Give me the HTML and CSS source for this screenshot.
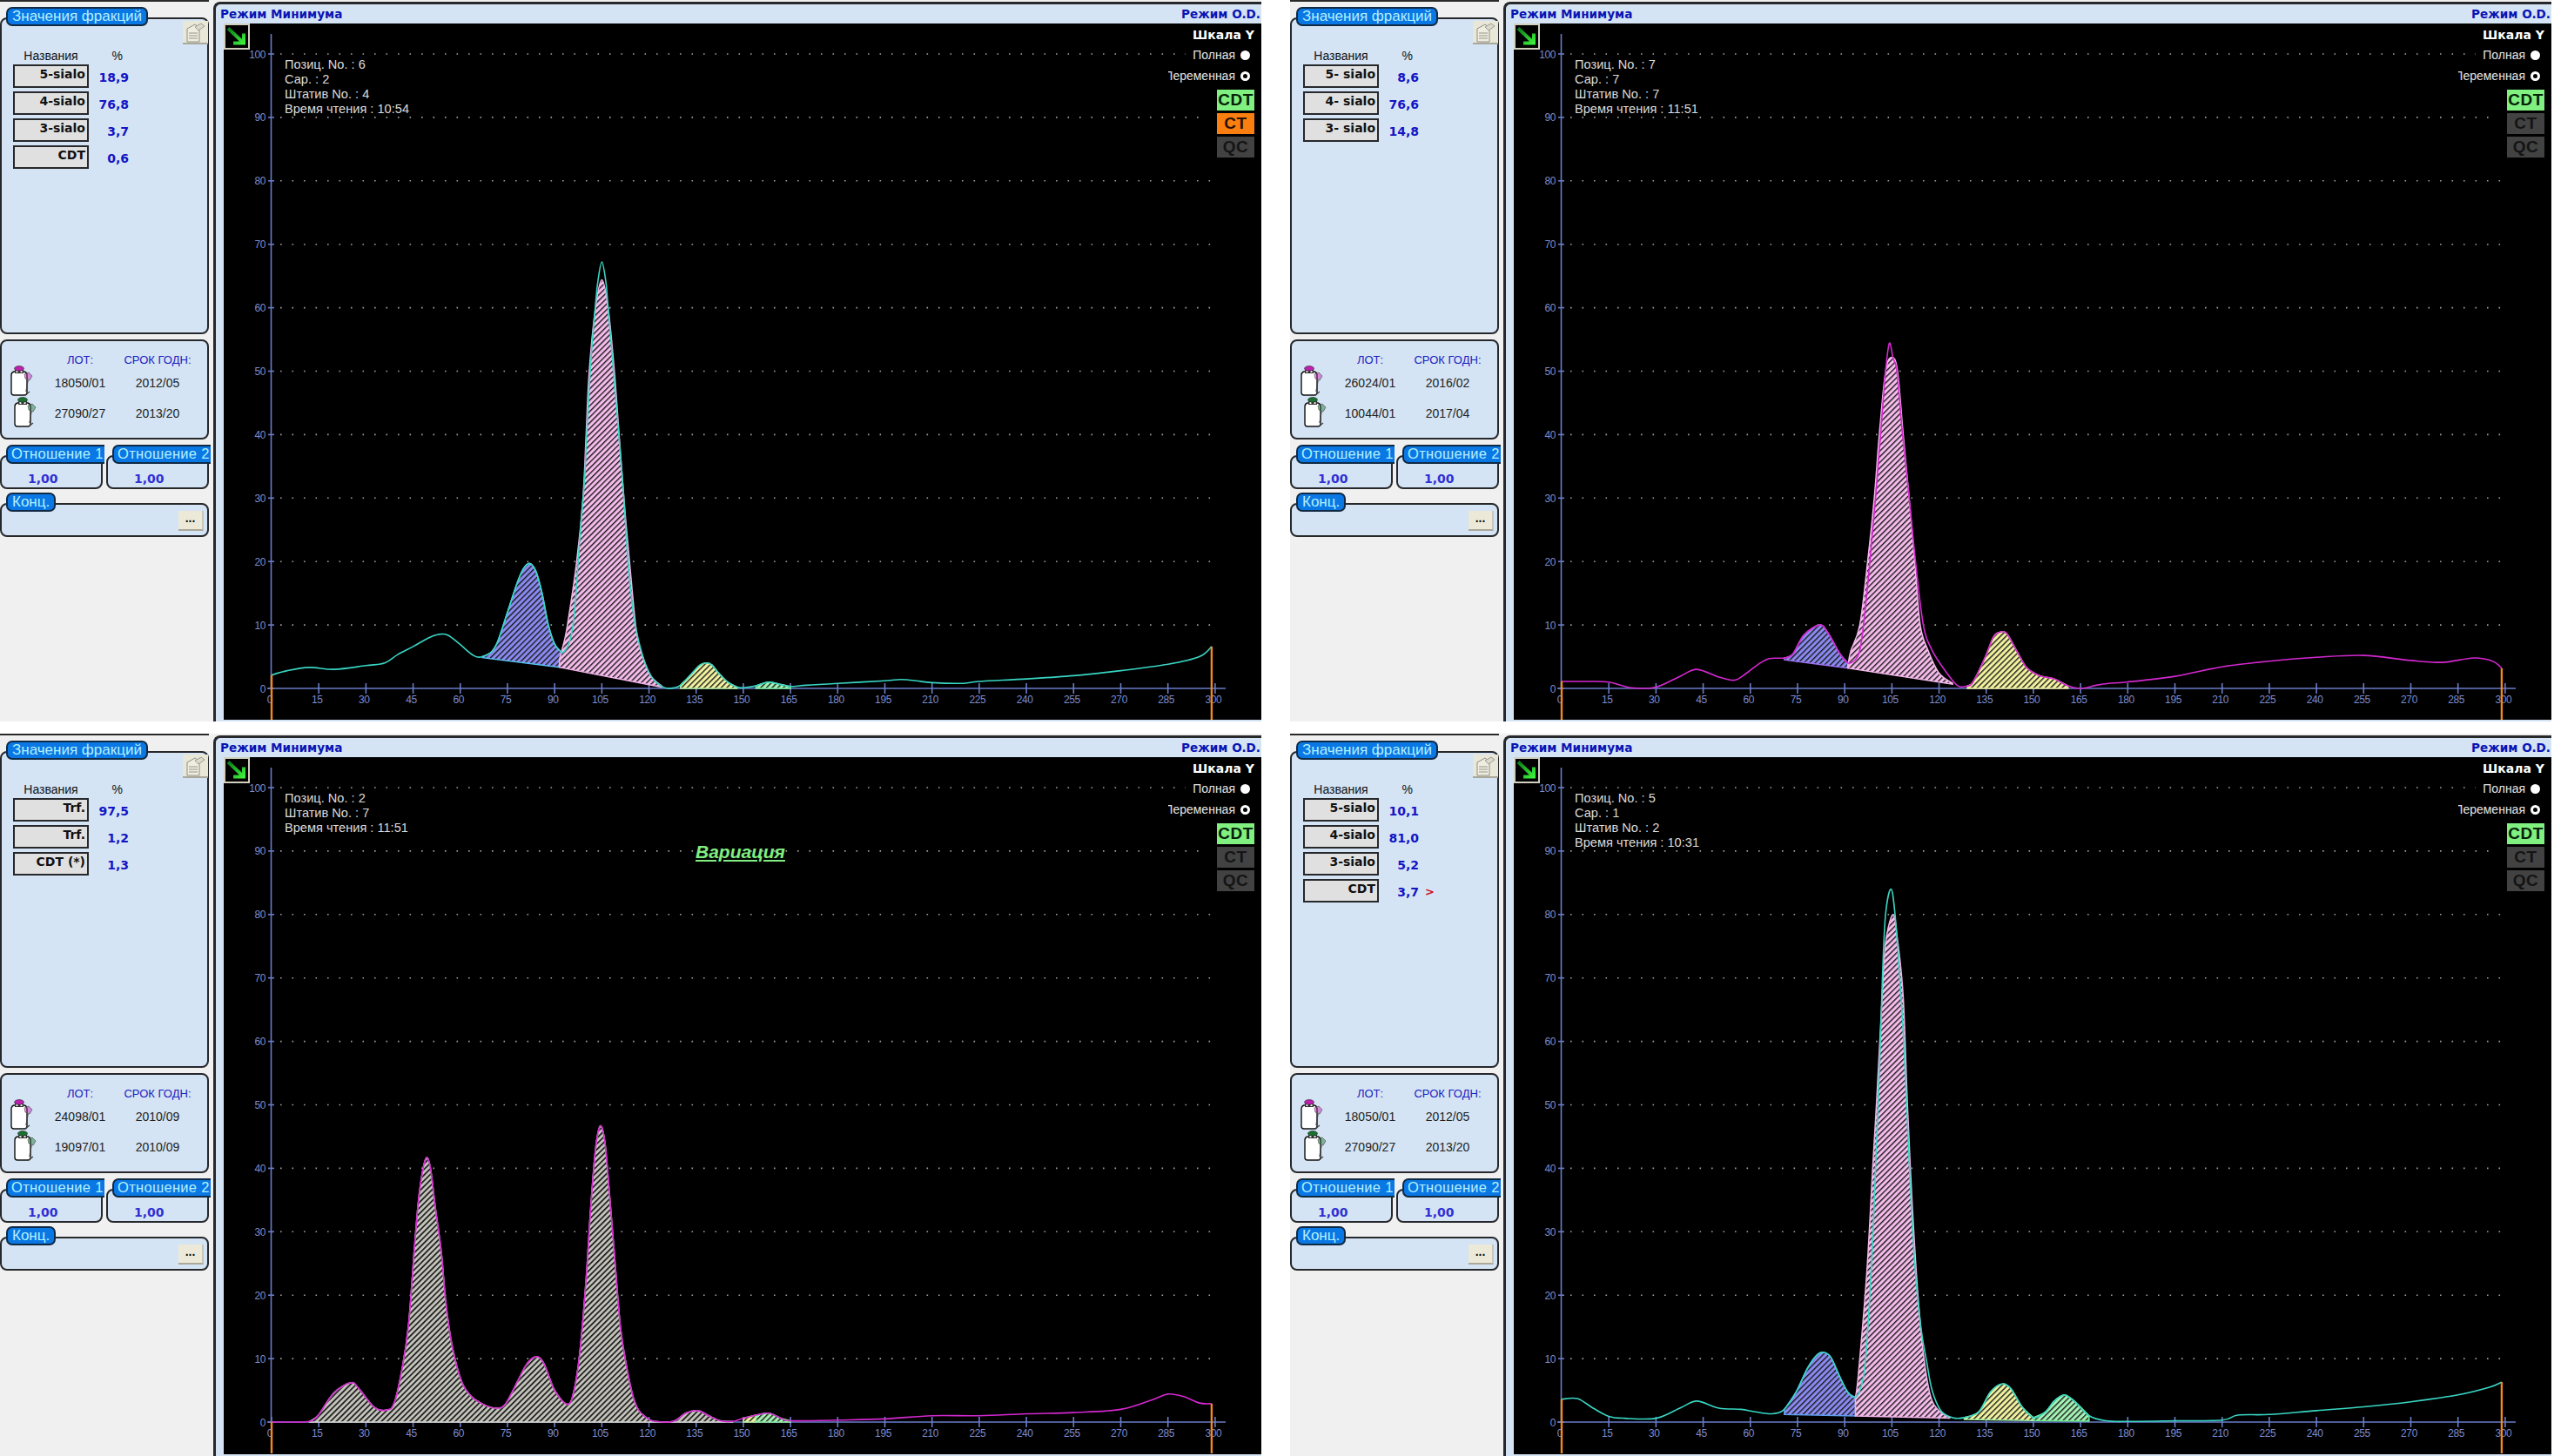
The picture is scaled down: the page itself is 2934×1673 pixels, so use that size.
FILE: index.html
```html
<!DOCTYPE html>
<html lang="ru">
<head>
    <meta charset="UTF-8">
    <title>CDT</title>
    <link rel="stylesheet" href="styles.css">
</head>
<body>

    <!-- shared hatches and icons -->
    <svg class="defs" width="0" height="0">
        <defs>
            <pattern id="hatch-blue" width="4.6" height="4.6" patternUnits="userSpaceOnUse" patternTransform="rotate(45)"><rect width="4.6" height="4.6" fill="#8a8af2"/><rect width="1.4" height="4.6" fill="#1a1a1a"/></pattern>
            <pattern id="hatch-pink" width="4.6" height="4.6" patternUnits="userSpaceOnUse" patternTransform="rotate(45)"><rect width="4.6" height="4.6" fill="#f6bcec"/><rect width="1.4" height="4.6" fill="#1a1a1a"/></pattern>
            <pattern id="hatch-yellow" width="4.6" height="4.6" patternUnits="userSpaceOnUse" patternTransform="rotate(45)"><rect width="4.6" height="4.6" fill="#f2f2a0"/><rect width="1.4" height="4.6" fill="#1a1a1a"/></pattern>
            <pattern id="hatch-green" width="4.6" height="4.6" patternUnits="userSpaceOnUse" patternTransform="rotate(45)"><rect width="4.6" height="4.6" fill="#a4f2b4"/><rect width="1.4" height="4.6" fill="#1a1a1a"/></pattern>
            <pattern id="hatch-grey" width="4.6" height="4.6" patternUnits="userSpaceOnUse" patternTransform="rotate(45)"><rect width="4.6" height="4.6" fill="#c4c4bc"/><rect width="1.7" height="4.6" fill="#1a1a1a"/></pattern>
            <linearGradient id="arrow-green" x1="0" y1="0" x2="1" y2="1"><stop offset="0" stop-color="#0c7a18"/><stop offset="1" stop-color="#3cf03c"/></linearGradient>
        </defs>
        <symbol id="i-arrow" viewBox="0 0 26 25">
            <path d="M3 3 L21 20 M21 9 L21 20 L9 20" fill="none" stroke="url(#arrow-green)" stroke-width="4"/>
        </symbol>
        <symbol id="i-report" viewBox="0 0 29 27">
            <path d="M5 9 L14 4 L19 8 L19 24 L5 24 Z" fill="#efeddf" stroke="#8f8f86"/>
            <path d="M14 7 L21 3 L25 6 L18 11 Z" fill="#dcdacb" stroke="#9c9c92"/>
            <path d="M7 14 H17 M7 17 H17 M7 20 H17" stroke="#96968c" stroke-width="1.2"/>
        </symbol>
        <symbol id="i-bottle" viewBox="0 0 26 36">
            <path d="M1 11 Q1 8 4 7 H16 Q19 8 19 11 V31 Q19 34 16 34 H4 Q1 34 1 31 Z" fill="#fff" stroke="#111" stroke-width="1.4"/>
            <rect x="5" y="5" width="10" height="4" fill="#333"/>
            <rect x="6.5" y="6" width="2" height="2" fill="#fff"/>
            <rect x="11.5" y="6" width="2" height="2" fill="#fff"/>
            <ellipse cx="10" cy="3.4" rx="5.5" ry="2.8" fill="currentColor" stroke="#222" stroke-width=".6"/>
            <path d="M16 10 L21 8 L25 12 L22 17 L17 15 Z" fill="currentColor" fill-opacity=".45" stroke="#555" stroke-width=".7"/>
            <path d="M20 17 L18 30 M17 34 L22 30" fill="none" stroke="#444" stroke-width="1.3"/>
        </symbol>
    </svg>

    <main class="board">

        <!-- 1 -->
        <section class="panel">
            <aside class="side">
                <div class="group group-values">
                    <div class="pill">Значения фракций</div>
                    <div class="report-btn"><svg><use href="#i-report"/></svg></div>
                    <div class="fr-head"><span>Названия</span><span class="pct">%</span></div>
                    <div class="fr-row"><span class="fr-name">5-sialo</span><span class="fr-val">18,9</span></div>
                    <div class="fr-row"><span class="fr-name">4-sialo</span><span class="fr-val">76,8</span></div>
                    <div class="fr-row"><span class="fr-name">3-sialo</span><span class="fr-val">3,7</span></div>
                    <div class="fr-row"><span class="fr-name">CDT</span><span class="fr-val">0,6</span></div>
                </div>
                <div class="group group-lots">
                    <span></span><span class="lot-head">ЛОТ:</span><span class="lot-head">СРОК ГОДН:</span>
                    <svg class="bottle bottle-a"><use href="#i-bottle"/></svg><span>18050/01</span><span>2012/05</span>
                    <svg class="bottle bottle-b"><use href="#i-bottle"/></svg><span>27090/27</span><span>2013/20</span>
                </div>
                <div class="ratios">
                    <div class="group ratio"><div class="pill pill-cut">Отношение 1</div><div class="ratio-val">1,00</div></div>
                    <div class="group ratio"><div class="pill pill-cut">Отношение 2</div><div class="ratio-val">1,00</div></div>
                </div>
                <div class="group group-conc"><div class="pill">Конц.</div><div class="dots-btn">...</div></div>
            </aside>
            <div class="frame">
                <header class="frame-head"><span>Режим Минимума</span><span>Режим O.D.</span></header>
                <div class="plot">
                    <svg class="chart" data-chart="a" viewBox="0 0 1190 800"></svg>
                    <div class="arrow-btn"><svg><use href="#i-arrow"/></svg></div>
                    <div class="info">Позиц. No. : 6<br>Сар. : 2<br>Штатив No. : 4<br>Время чтения : 10:54</div>
                    <div class="scale">
                        <div class="scale-title">Шкала Y</div>
                        <div class="mode"><span>Полная</span><i class="radio on"></i></div>
                        <div class="mode"><span class="mode-cut"><span>Переменная</span></span><i class="radio"></i></div>
                        <div class="tag tag-on">CDT</div>
                        <div class="tag tag-warn">CT</div>
                        <div class="tag">QC</div>
                    </div>
                </div>
            </div>
        </section>

        <!-- 2 -->
        <section class="panel">
            <aside class="side">
                <div class="group group-values">
                    <div class="pill">Значения фракций</div>
                    <div class="report-btn"><svg><use href="#i-report"/></svg></div>
                    <div class="fr-head"><span>Названия</span><span class="pct">%</span></div>
                    <div class="fr-row"><span class="fr-name">5- sialo</span><span class="fr-val">8,6</span></div>
                    <div class="fr-row"><span class="fr-name">4- sialo</span><span class="fr-val">76,6</span></div>
                    <div class="fr-row"><span class="fr-name">3- sialo</span><span class="fr-val">14,8</span></div>
                </div>
                <div class="group group-lots">
                    <span></span><span class="lot-head">ЛОТ:</span><span class="lot-head">СРОК ГОДН:</span>
                    <svg class="bottle bottle-a"><use href="#i-bottle"/></svg><span>26024/01</span><span>2016/02</span>
                    <svg class="bottle bottle-b"><use href="#i-bottle"/></svg><span>10044/01</span><span>2017/04</span>
                </div>
                <div class="ratios">
                    <div class="group ratio"><div class="pill pill-cut">Отношение 1</div><div class="ratio-val">1,00</div></div>
                    <div class="group ratio"><div class="pill pill-cut">Отношение 2</div><div class="ratio-val">1,00</div></div>
                </div>
                <div class="group group-conc"><div class="pill">Конц.</div><div class="dots-btn">...</div></div>
            </aside>
            <div class="frame">
                <header class="frame-head"><span>Режим Минимума</span><span>Режим O.D.</span></header>
                <div class="plot">
                    <svg class="chart" data-chart="b" viewBox="0 0 1190 800"></svg>
                    <div class="arrow-btn"><svg><use href="#i-arrow"/></svg></div>
                    <div class="info">Позиц. No. : 7<br>Сар. : 7<br>Штатив No. : 7<br>Время чтения : 11:51</div>
                    <div class="scale">
                        <div class="scale-title">Шкала Y</div>
                        <div class="mode"><span>Полная</span><i class="radio on"></i></div>
                        <div class="mode"><span class="mode-cut"><span>Переменная</span></span><i class="radio"></i></div>
                        <div class="tag tag-on">CDT</div>
                        <div class="tag">CT</div>
                        <div class="tag">QC</div>
                    </div>
                </div>
            </div>
        </section>

        <!-- 3 -->
        <section class="panel">
            <aside class="side">
                <div class="group group-values">
                    <div class="pill">Значения фракций</div>
                    <div class="report-btn"><svg><use href="#i-report"/></svg></div>
                    <div class="fr-head"><span>Названия</span><span class="pct">%</span></div>
                    <div class="fr-row"><span class="fr-name">Trf.</span><span class="fr-val">97,5</span></div>
                    <div class="fr-row"><span class="fr-name">Trf.</span><span class="fr-val">1,2</span></div>
                    <div class="fr-row"><span class="fr-name">CDT (*)</span><span class="fr-val">1,3</span></div>
                </div>
                <div class="group group-lots">
                    <span></span><span class="lot-head">ЛОТ:</span><span class="lot-head">СРОК ГОДН:</span>
                    <svg class="bottle bottle-a"><use href="#i-bottle"/></svg><span>24098/01</span><span>2010/09</span>
                    <svg class="bottle bottle-b"><use href="#i-bottle"/></svg><span>19097/01</span><span>2010/09</span>
                </div>
                <div class="ratios">
                    <div class="group ratio"><div class="pill pill-cut">Отношение 1</div><div class="ratio-val">1,00</div></div>
                    <div class="group ratio"><div class="pill pill-cut">Отношение 2</div><div class="ratio-val">1,00</div></div>
                </div>
                <div class="group group-conc"><div class="pill">Конц.</div><div class="dots-btn">...</div></div>
            </aside>
            <div class="frame">
                <header class="frame-head"><span>Режим Минимума</span><span>Режим O.D.</span></header>
                <div class="plot">
                    <svg class="chart" data-chart="c" viewBox="0 0 1190 800"></svg>
                    <div class="arrow-btn"><svg><use href="#i-arrow"/></svg></div>
                    <div class="info">Позиц. No. : 2<br>Штатив No. : 7<br>Время чтения : 11:51</div>
                    <div class="variation">Вариация</div>
                    <div class="scale">
                        <div class="scale-title">Шкала Y</div>
                        <div class="mode"><span>Полная</span><i class="radio on"></i></div>
                        <div class="mode"><span class="mode-cut"><span>Переменная</span></span><i class="radio"></i></div>
                        <div class="tag tag-on">CDT</div>
                        <div class="tag">CT</div>
                        <div class="tag">QC</div>
                    </div>
                </div>
            </div>
        </section>

        <!-- 4 -->
        <section class="panel">
            <aside class="side">
                <div class="group group-values">
                    <div class="pill">Значения фракций</div>
                    <div class="report-btn"><svg><use href="#i-report"/></svg></div>
                    <div class="fr-head"><span>Названия</span><span class="pct">%</span></div>
                    <div class="fr-row"><span class="fr-name">5-sialo</span><span class="fr-val">10,1</span></div>
                    <div class="fr-row"><span class="fr-name">4-sialo</span><span class="fr-val">81,0</span></div>
                    <div class="fr-row"><span class="fr-name">3-sialo</span><span class="fr-val">5,2</span></div>
                    <div class="fr-row"><span class="fr-name">CDT</span><span class="fr-val">3,7</span><span class="fr-mark">&gt;</span></div>
                </div>
                <div class="group group-lots">
                    <span></span><span class="lot-head">ЛОТ:</span><span class="lot-head">СРОК ГОДН:</span>
                    <svg class="bottle bottle-a"><use href="#i-bottle"/></svg><span>18050/01</span><span>2012/05</span>
                    <svg class="bottle bottle-b"><use href="#i-bottle"/></svg><span>27090/27</span><span>2013/20</span>
                </div>
                <div class="ratios">
                    <div class="group ratio"><div class="pill pill-cut">Отношение 1</div><div class="ratio-val">1,00</div></div>
                    <div class="group ratio"><div class="pill pill-cut">Отношение 2</div><div class="ratio-val">1,00</div></div>
                </div>
                <div class="group group-conc"><div class="pill">Конц.</div><div class="dots-btn">...</div></div>
            </aside>
            <div class="frame">
                <header class="frame-head"><span>Режим Минимума</span><span>Режим O.D.</span></header>
                <div class="plot">
                    <svg class="chart" data-chart="d" viewBox="0 0 1190 800"></svg>
                    <div class="arrow-btn"><svg><use href="#i-arrow"/></svg></div>
                    <div class="info">Позиц. No. : 5<br>Сар. : 1<br>Штатив No. : 2<br>Время чтения : 10:31</div>
                    <div class="scale">
                        <div class="scale-title">Шкала Y</div>
                        <div class="mode"><span>Полная</span><i class="radio on"></i></div>
                        <div class="mode"><span class="mode-cut"><span>Переменная</span></span><i class="radio"></i></div>
                        <div class="tag tag-on">CDT</div>
                        <div class="tag">CT</div>
                        <div class="tag">QC</div>
                    </div>
                </div>
            </div>
        </section>

    </main>

    <script src="chart.js"></script>
</body>
</html>
```

FILE: styles.css
```css
*{box-sizing: border-box;}
html, body{margin: 0; padding: 0; background: #fff;}
body{width: 2934px; height: 1673px; overflow: hidden; font-family: "Liberation Sans", Arial, sans-serif; font-size: 14px; color: #111;}

.defs{position: absolute;}

.board{display: grid; grid-template-columns: 1449px 1449px; grid-template-rows: 829px 830px; column-gap: 33px; row-gap: 14px;}
.panel{display: flex; gap: 5px; background: #f0f0f0; overflow: hidden; min-width: 0;}

/* left column */
.side{width: 240px; flex: none; border-top: 2px solid #2a2a2a; padding-top: 18px;}

.group{position: relative; background: #d4e4f4; border: 2px solid #26282c; border-radius: 8px;}
.group-values{height: 364px;}
.group-lots{height: 115px; margin-top: 6px; padding-top: 12px; display: grid; grid-template-columns: 44px 92px 86px; grid-template-rows: 18px 35px 35px; align-items: center; justify-items: center; color: #222;}
.lot-head{color: #1a20c0; font-size: 13px;}

.pill{display: inline-block; height: 22px; line-height: 17px; margin: -14px 0 0 5px; padding: 0 5px; background: #0a78e4; border: 2px solid #102a44; border-radius: 7px; color: #b4f0ff; font-size: 17px; white-space: nowrap; vertical-align: top;}
.pill-cut{width: 113px; padding: 0 0 0 4px; border-right: 0; border-radius: 7px 0 0 7px; overflow: hidden; font-size: 16.5px; letter-spacing: .3px;}

.report-btn{position: absolute; top: 2px; right: -1px; width: 29px; height: 27px; background: #e9e7d8; border-bottom: 2px solid #a8a79a;}
.report-btn svg{display: block; width: 29px; height: 27px;}

.fr-head{display: grid; grid-template-columns: 87px 46px; margin: 17px 0 0 13px; height: 19px; line-height: 19px; font-size: 14px; text-align: center;}
.pct{text-align: right; padding-right: 7px;}
.fr-row{display: grid; grid-template-columns: 87px 46px 24px; height: 27px; margin: 0 0 4px 13px; align-items: center;}
.fr-name{height: 27px; background: #e0e0e0; border: 2px solid #26282c; padding: 0 2px 0 0; font: bold 14px/18px "DejaVu Sans", sans-serif; text-align: right; color: #111;}
.fr-val{font: bold 14px "DejaVu Sans", sans-serif; color: #1414c4; text-align: right; padding-top: 2px;}
.fr-mark{font: bold 13px "DejaVu Sans", sans-serif; color: #d01028; padding: 2px 0 0 7px;}

.bottle{width: 26px; height: 36px; display: block;}
.bottle-a{color: #c020b0; margin: -3px 0 0 2px;}
.bottle-b{color: #1a7030; margin: -2px 0 0 10px;}

.ratios{display: flex; gap: 4px; margin-top: 18px;}
.ratio{width: 118px; height: 39px;}
.ratio-val{font: bold 14px "DejaVu Sans", sans-serif; color: #3030d4; padding: 0 0 0 30px; line-height: 18px;}

.group-conc{height: 39px; margin-top: 16px;}
.dots-btn{position: absolute; top: 7px; right: 4px; width: 29px; height: 23px; background: #ece9d8; border-bottom: 2px solid #aaa89a; border-right: 2px solid #c8c6b6; text-align: center; font-size: 14px; font-weight: bold; line-height: 17px; color: #111;}

/* chart frame */
.frame{flex: 1; min-width: 0; margin-top: 2px; display: flex; flex-direction: column; background: #d4e4f4; border: solid #26282c; border-width: 3px 0 0 3px; border-radius: 8px 0 0 0; padding-bottom: 2px;}
.frame-head{flex: none; height: 22px; display: flex; justify-content: space-between; align-items: center; padding: 0 1px 0 5px; font: bold 13.6px "DejaVu Sans", sans-serif; color: #0a14b4;}
.plot{position: relative; flex: 1; margin-left: 9px; background: #000; overflow: hidden; min-height: 0;}
.chart{display: block; width: 1190px; height: 800px;}

.arrow-btn{position: absolute; top: 0; left: 0; width: 30px; height: 30px; background: #000; border: 2px solid #d2d0c0;}
.arrow-btn svg{display: block; width: 26px; height: 26px;}

.info{position: absolute; top: 39px; left: 70px; color: #dcdcdc; font-size: 14.6px; line-height: 17px; white-space: nowrap;}
.variation{position: absolute; top: 97px; left: 542px; color: #80ee80; font: italic bold 21px "Liberation Sans", sans-serif; text-decoration: underline;}

.scale{position: absolute; top: 4px; right: 8px; display: flex; flex-direction: column; align-items: flex-end; color: #e4e4e4;}
.scale-title{height: 19px; font: bold 14px/19px "DejaVu Sans", sans-serif; color: #fff; margin-bottom: 1px;}
.mode{display: flex; align-items: center; gap: 6px; height: 24px; padding: 0 5px 0 8px; background: #000; font-size: 14px;}
.mode-cut{display: flex; justify-content: flex-end; width: 77px; overflow: hidden; white-space: nowrap;}
.radio{display: block; width: 11px; height: 11px; border-radius: 50%; background: #000; border: 3px solid #fff;}
.radio.on{background: #fff;}
.tag{width: 43px; height: 24px; margin-top: 3px; background: #424242; color: #141414; font: bold 19px/24px "Liberation Sans", sans-serif; text-align: center; letter-spacing: .5px; box-shadow: -12px 0 0 #000;}
.tag-on{background: #80f080; color: #062006; margin-top: 4px;}
.tag-warn{background: #fb7f10; color: #2a1000;}

/* svg chart parts */
.grid{stroke: #a0a0a0; stroke-width: 1.6; stroke-dasharray: 1.6 11.9;}
.axis{stroke: #6a7cc8; stroke-width: 1.6;}
.label{fill: #7c8cd0; font: 12px "Liberation Sans", sans-serif; letter-spacing: -.4px;}
.limit{stroke: #f08a20; stroke-width: 2.4;}
```

FILE: chart.js
```js
// pixel scale of the plot
const X0 = 55, Y0 = 764, PER_T = 3.613, PER_V = 7.29;
const px = t => X0 + t * PER_T;
const py = v => Y0 - v * PER_V;

// ELUTION DATA :: [time, value] read off each run
const TEAL = '#38d6c4', MAGENTA = '#d428d0';

const charts = {
    a: {
        line: TEAL,
        base: [[66, 4.9], [92, 3.3], [126, 0], [300, 0]],
        curve: [[0,2.1],[5,2.8],[12,3.3],[20,3],[30,3.6],[36,4],[40,5.3],[45,6.6],[50,8],[53,8.5],[56,8.4],[60,6.9],[63,5.6],[65,5],[67,5],[70,5.8],[72,7.5],[75,12],[78,16.5],[80,18.8],[82,19.7],[84,18.5],[86,15],[88,10],[90,7],[92,5.8],[93,5.8],[94.5,7],[95.8,9.8],[96.7,14.4],[98,23.7],[99.5,33],[100.2,40],[101.3,50],[102.2,56],[102.9,60],[103.7,64],[105,67.2],[106.3,64],[107,60],[108.7,50],[110.4,40],[112,30],[113.3,20],[114.4,14.4],[115.6,10],[118,5.1],[120.7,1.9],[123.5,.5],[126,0],[128,.1],[130,.5],[133,2],[136,3.6],[138,4],[140,3.7],[142,2.5],[145,1],[148,.2],[150,.1],[154,.4],[158,1],[162,.6],[165,.3],[170,.5],[180,.8],[195,1.2],[200,1.4],[205,1.2],[210,.9],[220,.8],[225,1.1],[240,1.5],[255,2],[270,2.8],[285,3.8],[295,5],[298.9,6.6]],
        fills: [
            { hatch: 'blue', edge: '#58c4f4', range: [66, 92] },
            { hatch: 'pink', edge: '#f0b4e8', top: [[91.5,4.6],[92.5,6.4],[94,9.8],[97,20],[99,30],[100,40],[101,50],[103,60],[105,64.4],[107,60],[109,50],[110.5,40],[112,30],[113.8,20],[116,9],[118,5],[120.5,2],[124,.4]] },
            { hatch: 'yellow', edge: '#b8f0a0', range: [130, 148] },
            { hatch: 'green', edge: '#80f0a0', range: [152, 168] }
        ]
    },
    b: {
        line: MAGENTA,
        base: [[71, 4.5], [91, 3.2], [125, .6], [129, 0], [300, 0]],
        curve: [[0,1.1],[8,1.1],[15,1],[22,.1],[30,.2],[38,2],[43,3],[50,1.8],[55,1.3],[58.8,2.4],[62.5,3.8],[66,4.7],[70.8,4.8],[73.5,5.4],[77,8.4],[82,10],[84.6,8.8],[88.3,5.6],[91,4],[93.5,4.6],[94.8,6],[96,10],[98,20],[99.8,30],[101.4,40],[103,50],[104.2,54.4],[105.4,52],[106.6,50],[108.4,40],[110.5,30],[112.5,20],[115,10],[117.8,6],[122.5,2.4],[126,.4],[129,.4],[130.8,1],[134.5,4.7],[137.2,8],[139,8.8],[141.4,8.7],[144.6,6],[147.8,3.3],[152,2],[156.6,1.5],[161,.4],[165,0],[170,.5],[174,.8],[179.6,1],[195,1.9],[210,3.4],[225,4.3],[240,4.9],[255,5.2],[270,4.4],[280,4.1],[290,4.8],[296,4.3],[298.9,3.2]],
        fills: [
            { hatch: 'blue', edge: '#a070f0', range: [70.8, 91] },
            { hatch: 'pink', edge: '#f4b8ec', top: [[91,3.6],[92,6],[94.8,10],[97.3,20],[99.4,30],[101,40],[103,50],[105,52.2],[106.8,50],[108.6,40],[110.5,30],[112.3,20],[114,10],[116.5,6],[120,2.4],[124.3,.8]] },
            { hatch: 'yellow', edge: '#f0f0a0', range: [129, 161] }
        ]
    },
    c: {
        line: MAGENTA,
        base: [[0, 0], [300, 0]],
        curve: [[0,0],[6,0],[12,.1],[14.9,1.1],[19.8,4.6],[25.2,6.2],[27.7,5.3],[32.7,2.3],[36.6,1.9],[39,3],[41.6,8.7],[43.6,15.6],[45.5,28],[47,36.2],[49,41.5],[50.5,40],[52,34],[54,26.6],[55.4,18.8],[57.4,12],[60.4,6.4],[63.4,4.1],[67.3,2.8],[71.3,2.2],[74.3,2.8],[78.2,6.4],[81.2,9.2],[84.2,10.3],[86.6,9.2],[90,5],[94,2.8],[96,4.6],[98,11],[100,22.5],[101.5,34],[103,43],[104.5,46.7],[106,44],[107.4,36.2],[108.9,27],[110.9,15],[112.9,8.7],[114.9,4.1],[116.8,1.8],[119.8,.5],[121.8,.1],[127.7,.1],[131.7,1.4],[135.6,1.8],[138.6,1.1],[142.6,.2],[146.5,.1],[150,.6],[154,1.1],[158,1.4],[162,.6],[165,.2],[180,.3],[195,.5],[210,1],[225,1],[240,1.3],[255,1.5],[270,2],[280,3.5],[285,4.4],[290,4],[295,3],[298.9,2.9]],
        fills: [
            { hatch: 'grey', edge: '#d8d8d0', range: [12, 146.5] },
            { hatch: 'yellow', edge: '#c0f0a0', range: [148, 154] },
            { hatch: 'green', edge: '#90f0a0', range: [154, 165] }
        ]
    },
    d: {
        line: TEAL,
        base: [[71, 1.2], [125, .6], [128, .4], [172, .1], [300, 0]],
        curve: [[0,3.6],[5,3.7],[10,2.2],[15,.9],[20,.6],[30,.6],[38,2.3],[43,3.3],[50,2.2],[57,2],[61.6,1.6],[67,1.3],[70.8,2],[74.5,4.7],[78.2,8.5],[81,10.5],[83.2,11],[85.6,10.2],[88.3,7.3],[91,4.7],[93.4,3.9],[95.2,5.6],[96.6,9.7],[98.5,24.7],[99.9,41],[101,55],[102,70],[103,80],[104.7,84],[106,80],[107.5,70],[109,58],[110.5,41],[112.3,24.7],[114.2,15],[116,9.7],[117.8,5],[120.6,1.8],[124.3,.7],[128,.7],[132.6,1.6],[136.3,4.7],[140,6],[142.8,5.3],[146.4,2.4],[150,.7],[153.8,1.6],[156.6,3.3],[159.8,4.3],[163,3.3],[167.7,1],[173,.2],[180,.1],[195,.2],[210,.3],[215,1.1],[225,1.2],[240,1.8],[255,2.4],[270,3.2],[285,4.3],[295,5.5],[298.9,6.3]],
        fills: [
            { hatch: 'blue', edge: '#60a0f0', range: [70.8, 93.4] },
            { hatch: 'pink', edge: '#f0b4e8', top: [[93.4,3.9],[94.3,7.3],[97,23.5],[99,41],[100.3,52],[101.7,65],[103,75.5],[105.4,80],[106.8,76],[108.6,67],[110,49.5],[111.4,35],[113.2,20.6],[115,10.8],[117.4,3.9],[120.6,1.5],[123.4,.8]] },
            { hatch: 'yellow', edge: '#a0f0a0', range: [128, 150] },
            { hatch: 'green', edge: '#70f090', range: [150, 170] }
        ]
    }
};

// FUNCTIONS :: path helpers
const pt = p => `${px(p[0]).toFixed(1)} ${py(p[1]).toFixed(1)}`;

function smooth(points) {
    let d = '';
    for (let i = 0; i < points.length - 1; i++) {
        const p0 = points[i - 1] || points[i], p1 = points[i], p2 = points[i + 1], p3 = points[i + 2] || p2;
        const c1 = [p1[0] + (p2[0] - p0[0]) / 6, p1[1] + (p2[1] - p0[1]) / 6];
        const c2 = [p2[0] - (p3[0] - p1[0]) / 6, p2[1] - (p3[1] - p1[1]) / 6];
        d += ` C${pt(c1)} ${pt(c2)} ${pt(p2)}`;
    }
    return d;
}

function baseAt(base, t) {
    for (let i = 0; i < base.length - 1; i++) {
        const a = base[i], b = base[i + 1];
        if (t <= b[0]) return a[1] + (b[1] - a[1]) * Math.max(0, t - a[0]) / (b[0] - a[0]);
    }
    return 0;
}

function fillPath(chart, fill) {
    const top = fill.top || chart.curve.filter(p => p[0] >= fill.range[0] && p[0] <= fill.range[1]);
    const a = top[0][0], b = top[top.length - 1][0];
    return `M${pt(top[0])}${smooth(top)} L${pt([b, baseAt(chart.base, b)])} L${pt([a, baseAt(chart.base, a)])} Z`;
}

function chartMarkup(chart) {
    let out = '';

    // dotted grid and y axis labels
    for (let v = 0; v <= 100; v += 10) {
        if (v) out += `<line class="grid" x1="65" x2="${px(300)}" y1="${py(v)}" y2="${py(v)}"/>`;
        out += `<line class="axis" x1="51" x2="58" y1="${py(v)}" y2="${py(v)}"/>`;
        out += `<text class="label" text-anchor="end" x="48" y="${py(v) + 4.5}">${v}</text>`;
    }

    // x axis ticks
    for (let t = 0; t <= 300; t += 15) {
        out += `<line class="axis" x1="${px(t)}" x2="${px(t)}" y1="${Y0 - 6}" y2="${Y0 + 6}"/>`;
        out += `<text class="label" text-anchor="middle" x="${px(t) - 2}" y="${Y0 + 17}">${t}</text>`;
    }
    out += `<line class="axis" x1="54.5" x2="54.5" y1="12" y2="${Y0}"/>`;
    out += `<line class="axis" x1="50" x2="1151" y1="${Y0}" y2="${Y0}"/>`;

    // fractions under the raw trace
    chart.fills.forEach(f => {
        out += `<path d="${fillPath(chart, f)}" fill="url(#hatch-${f.hatch})" stroke="${f.edge}" stroke-width="1.5"/>`;
    });

    const c = chart.curve, last = c[c.length - 1];
    out += `<path d="M${pt(c[0])}${smooth(c)}" fill="none" stroke="${chart.line}" stroke-width="1.6"/>`;

    // integration limits
    out += `<line class="limit" x1="${px(0)}" x2="${px(0)}" y1="${py(c[0][1])}" y2="800"/>`;
    out += `<line class="limit" x1="${px(last[0])}" x2="${px(last[0])}" y1="${py(last[1])}" y2="800"/>`;
    return out;
}

// RENDER
document.querySelectorAll('.chart').forEach(svg => {
    svg.innerHTML = chartMarkup(charts[svg.dataset.chart]);
});
```
